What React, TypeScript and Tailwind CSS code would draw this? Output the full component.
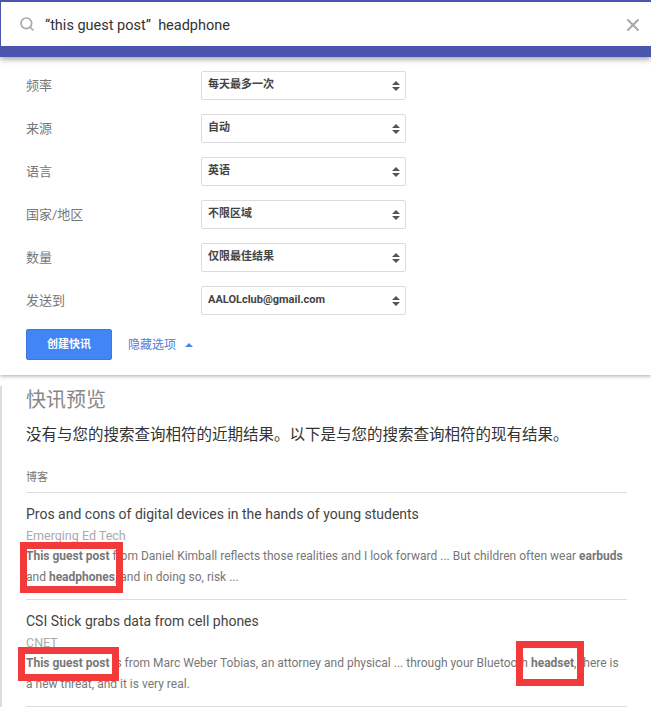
import { Search, X } from 'lucide-react';

const FONT = "font-['Roboto','Noto_Sans_CJK_SC',sans-serif]";

const OPTIONS = [
  { label: '频率', value: '每天最多一次' },
  { label: '来源', value: '自动' },
  { label: '语言', value: '英语' },
  { label: '国家/地区', value: '不限区域' },
  { label: '数量', value: '仅限最佳结果' },
  { label: '发送到', value: 'AALOLclub@gmail.com' },
];

function OptionRow({ label, value }: { label: string; value: string }) {
  return (
    <div className="flex items-center h-[29px] mb-[14px]">
      <div className="w-[175px] text-[13px] text-[#777]">{label}</div>
      <div className="w-[205px] h-[29px] flex items-center justify-between pl-[6px] pr-[5px] bg-white border border-[#dcdcdc] rounded-[2px]">
        <span className="text-[11px] font-bold text-[#444]">{value}</span>
        <span className="flex flex-col gap-[2px]">
          <span className="w-0 h-0 border-x-[4px] border-x-transparent border-b-[4px] border-b-[#555]" />
          <span className="w-0 h-0 border-x-[4px] border-x-transparent border-t-[4px] border-t-[#555]" />
        </span>
      </div>
    </div>
  );
}

export default function App() {
  return (
    <div className={`${FONT} relative w-[651px] h-[708px] overflow-hidden bg-white`}>
      <header className="relative z-10 border-t-[2px] border-b-[11px] border-l border-[#4a55ae] h-[57px] flex items-center justify-between pl-[18px] pr-[8px] bg-white shadow-[0_2px_6px_rgba(0,0,0,0.4)]">
        <div className="flex items-center gap-[10px]">
          <Search size={16} strokeWidth={2.5} className="text-[#aaa]" />
          <span className="text-[14.5px] text-[#333] pt-[4px] whitespace-pre">“this guest post”  headphone</span>
        </div>
        <X size={20} strokeWidth={2.5} className="text-[#aaa] mt-[2px]" />
      </header>

      <section className="h-[318px] pl-[26px] pt-[14px] bg-white shadow-[0_1px_4px_rgba(0,0,0,0.35)]">
        {OPTIONS.map((o) => (
          <OptionRow key={o.label} label={o.label} value={o.value} />
        ))}
        <div className="flex items-center gap-[16px]">
          <button className="w-[86px] h-[31px] bg-[#4285f4] border border-[#3b78e7] rounded-[2px] text-white text-[11px] font-bold pt-[1px]">
            创建快讯
          </button>
          <span className="text-[12px] text-[#4d80d9]">隐藏选项</span>
          <span className="w-0 h-0 -ml-[7px] border-x-[4px] border-x-transparent border-b-[4px] border-b-[#4285f4]" />
        </div>
      </section>

      <main className="pl-[24px] w-[627px] border-l-[2px] border-[#ddd]">
        <h2 className="text-[20px] leading-[28px] text-[#888] font-normal mt-[11px]">快讯预览</h2>
        <p className="text-[15.5px] leading-[22px] text-[#333] mt-[10px] whitespace-nowrap">
          没有与您的搜索查询相符的近期结果。以下是与您的搜索查询相符的现有结果。
        </p>
        <div className="text-[11px] leading-[16px] text-[#777] mt-[24px] pb-[6px] border-b border-[#ddd]">博客</div>

        <article className="pt-[11px] pb-[11px] border-b border-[#ddd]">
          <div className="text-[14px] leading-[20px] text-[#444]">Pros and cons of digital devices in the hands of young students</div>
          <div className="text-[12.5px] leading-[20px] text-[#aaa] mt-[2px]">Emerging Ed Tech</div>
          <p className="text-[12px] leading-[21px] text-[#777] whitespace-nowrap">
            <b>This guest post</b> from Daniel Kimball reflects those realities and I look forward ... But children often wear <b>earbuds</b>
            <br />
            and <b>headphones</b>, and in doing so, risk ...
          </p>
        </article>

        <article className="pt-[11px] pb-[11px] border-b border-[#ddd]">
          <div className="text-[14px] leading-[20px] text-[#444]">CSI Stick grabs data from cell phones</div>
          <div className="text-[12.5px] leading-[20px] text-[#aaa] mt-[2px]">CNET</div>
          <p className="text-[12px] leading-[21px] text-[#777] whitespace-nowrap">
            <b>This guest post</b> is from Marc Weber Tobias, an attorney and physical ... through your Bluetooth <b>headset</b>, there is
            <br />
            a new threat, and it is very real.
          </p>
        </article>
      </main>

      {/* red annotation boxes */}
      <div className="absolute left-[20px] top-[542px] w-[103px] h-[51px] border-[7px] border-[#f23a3a]" />
      <div className="absolute left-[18px] top-[647px] w-[101px] h-[34px] border-[7px] border-[#f23a3a]" />
      <div className="absolute left-[516px] top-[641px] w-[68px] h-[45px] border-[7px] border-[#f23a3a]" />
    </div>
  );
}
